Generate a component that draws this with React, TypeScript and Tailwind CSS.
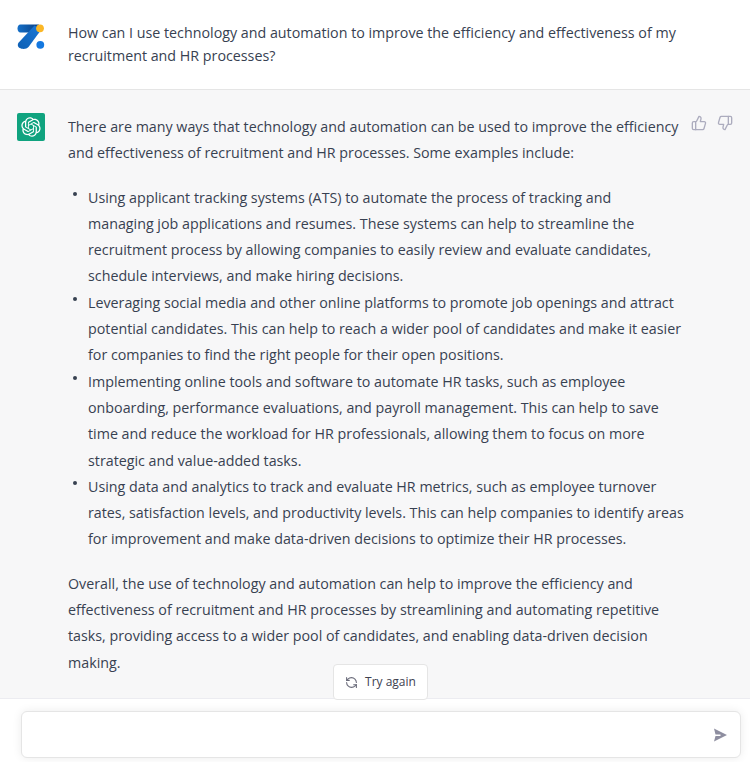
import { RefreshCcw, ThumbsDown, ThumbsUp } from 'lucide-react';
import React from 'react';

const BULLETS = [
  [
    'Using applicant tracking systems (ATS) to automate the process of tracking and',
    'managing job applications and resumes. These systems can help to streamline the',
    'recruitment process by allowing companies to easily review and evaluate candidates,',
    'schedule interviews, and make hiring decisions.',
  ],
  [
    'Leveraging social media and other online platforms to promote job openings and attract',
    'potential candidates. This can help to reach a wider pool of candidates and make it easier',
    'for companies to find the right people for their open positions.',
  ],
  [
    'Implementing online tools and software to automate HR tasks, such as employee',
    'onboarding, performance evaluations, and payroll management. This can help to save',
    'time and reduce the workload for HR professionals, allowing them to focus on more',
    'strategic and value-added tasks.',
  ],
  [
    'Using data and analytics to track and evaluate HR metrics, such as employee turnover',
    'rates, satisfaction levels, and productivity levels. This can help companies to identify areas',
    'for improvement and make data-driven decisions to optimize their HR processes.',
  ],
];

const Lines = ({ lines }: { lines: string[] }) => (
  <>
    {lines.map((line) => (
      <span key={line} className="block whitespace-nowrap">
        {line}
      </span>
    ))}
  </>
);

const Logo = () => (
  <svg width="28" height="26" viewBox="0 0 28 26" className="shrink-0">
    <defs>
      <linearGradient id="logoBar" x1="0" y1="0" x2="1" y2="0">
        <stop offset="0" stopColor="#1570c9" />
        <stop offset="1" stopColor="#0a3f82" />
      </linearGradient>
      <linearGradient id="logoStroke" x1="0" y1="1" x2="1" y2="0">
        <stop offset="0" stopColor="#0d5fb4" />
        <stop offset="1" stopColor="#1b78d6" />
      </linearGradient>
    </defs>
    <path d="M3.500 0.500H22L17 8.500H3.500C-0.500 8.500 -0.500 0.500 3.500 0.500Z" fill="url(#logoBar)" />
    <path d="M17.500 1.500L24 6L11.500 23C9 26 1 25.500 0.800 21C0.800 20.200 1 19.500 1.500 18.800Z" fill="url(#logoStroke)" />
    <circle cx="23" cy="4.300" r="3.900" fill="#fbb726" />
    <circle cx="23.300" cy="20.800" r="3.900" fill="#1478e0" />
  </svg>
);

const OpenAiLogo = () => (
  <div className="w-7 h-7 shrink-0 rounded-[2px] bg-[#10a37f] flex items-center justify-center">
    <svg width="20" height="20" viewBox="0 0 41 41" fill="white">
      <path d="M37.5324 16.8707C37.9808 15.5241 38.1363 14.0974 37.9886 12.6859C37.8409 11.2744 37.3934 9.91076 36.676 8.68622C35.6126 6.83404 33.9882 5.3676 32.0373 4.4985C30.0864 3.62941 27.9098 3.40259 25.8215 3.85078C24.8796 2.7893 23.7219 1.94125 22.4257 1.36341C21.1295 0.785575 19.7249 0.491269 18.3058 0.500197C16.1708 0.495044 14.0893 1.16803 12.3614 2.42214C10.6335 3.67624 9.34853 5.44666 8.6917 7.47815C7.30085 7.76286 5.98686 8.3414 4.8377 9.17505C3.68854 10.0087 2.73073 11.0782 2.02839 12.312C0.956464 14.1591 0.498905 16.2988 0.721698 18.4228C0.944492 20.5467 1.83612 22.5449 3.268 24.1293C2.81966 25.4759 2.66413 26.9026 2.81182 28.3141C2.95951 29.7256 3.40701 31.0892 4.12437 32.3138C5.18791 34.1659 6.8123 35.6322 8.76321 36.5013C10.7141 37.3704 12.8907 37.5973 14.9789 37.1492C15.9208 38.2107 17.0786 39.0587 18.3747 39.6366C19.6709 40.2144 21.0755 40.5087 22.4946 40.4998C24.6307 40.5054 26.7133 39.8321 28.4418 38.5772C30.1704 37.3223 31.4556 35.5506 32.1119 33.5179C33.5027 33.2332 34.8167 32.6547 35.9659 31.821C37.115 30.9874 38.0728 29.9178 38.7752 28.684C39.8458 26.8371 40.3023 24.6979 40.0789 22.5748C39.8556 20.4517 38.9639 18.4544 37.5324 16.8707ZM22.4978 37.8849C20.7443 37.8874 19.0459 37.2733 17.6994 36.1501C17.7601 36.117 17.8666 36.0586 17.936 36.0161L25.9004 31.4156C26.1003 31.3019 26.2663 31.137 26.3813 30.9378C26.4964 30.7386 26.5563 30.5124 26.5549 30.2825V19.0542L29.9213 20.998C29.9389 21.0068 29.9541 21.0198 29.9656 21.0359C29.977 21.052 29.9842 21.0707 29.9867 21.0902V30.3889C29.9842 32.375 29.1946 34.2791 27.7909 35.6841C26.3872 37.0892 24.4838 37.8806 22.4978 37.8849ZM6.39227 31.0064C5.51397 29.4888 5.19742 27.7107 5.49804 25.9832C5.55718 26.0187 5.66048 26.0818 5.73461 26.1244L13.699 30.7248C13.8975 30.8408 14.1233 30.902 14.3532 30.902C14.583 30.902 14.8088 30.8408 15.0073 30.7248L24.731 25.1103V28.9979C24.7321 29.0177 24.7283 29.0376 24.7199 29.0556C24.7115 29.0736 24.6988 29.0893 24.6829 29.1012L16.6317 33.7497C14.9096 34.7416 12.8643 35.0097 10.9447 34.4954C9.02506 33.9811 7.38785 32.7263 6.39227 31.0064ZM4.29707 13.6194C5.17156 12.0998 6.55279 10.9364 8.19885 10.3327C8.19885 10.4013 8.19491 10.5228 8.19491 10.6071V19.808C8.19351 20.0378 8.25334 20.2638 8.36823 20.4629C8.48312 20.6619 8.64893 20.8267 8.84863 20.9404L18.5723 26.5542L15.206 28.4979C15.1894 28.5089 15.1703 28.5155 15.1505 28.5173C15.1307 28.5191 15.1107 28.516 15.0924 28.5082L7.04046 23.8557C5.32135 22.8601 4.06716 21.2235 3.55289 19.3046C3.03862 17.3858 3.30624 15.3413 4.29707 13.6194ZM31.955 20.0556L22.2312 14.4411L25.5976 12.4981C25.6142 12.4872 25.6333 12.4805 25.6531 12.4787C25.6729 12.4769 25.6928 12.4801 25.7111 12.4879L33.7631 17.1364C34.9967 17.849 36.0017 18.8982 36.6606 20.1613C37.3194 21.4244 37.6047 22.849 37.4832 24.2684C37.3617 25.6878 36.8382 27.0432 35.9743 28.1759C35.1103 29.3086 33.9415 30.1717 32.6047 30.6641C32.6047 30.5947 32.6047 30.4733 32.6047 30.3889V21.188C32.6066 20.9586 32.5474 20.7328 32.4332 20.5338C32.319 20.3348 32.154 20.1698 31.955 20.0556ZM35.3055 15.0128C35.2464 14.9765 35.1431 14.9142 35.069 14.8717L27.1045 10.2712C26.906 10.1554 26.6803 10.0943 26.4504 10.0943C26.2206 10.0943 25.9948 10.1554 25.7963 10.2712L16.0726 15.8858V11.9982C16.0715 11.9783 16.0753 11.9585 16.0837 11.9405C16.0921 11.9225 16.1048 11.9068 16.1207 11.8949L24.1719 7.25025C25.4053 6.53903 26.8158 6.19376 28.2383 6.25482C29.6608 6.31589 31.0364 6.78077 32.2044 7.59508C33.3723 8.40939 34.2842 9.53945 34.8334 10.8531C35.3826 12.1667 35.5464 13.6095 35.3055 15.0128ZM14.2424 21.9419L10.8752 19.9981C10.8576 19.9893 10.8423 19.9763 10.8309 19.9602C10.8195 19.9441 10.8122 19.9254 10.8098 19.9058V10.6071C10.8107 9.18295 11.2173 7.78848 11.9819 6.58696C12.7466 5.38544 13.8377 4.42659 15.1275 3.82264C16.4173 3.21869 17.8524 2.99464 19.2649 3.1767C20.6775 3.35876 22.0089 3.93941 23.1034 4.85067C23.0427 4.88379 22.937 4.94215 22.8668 4.98473L14.9024 9.58517C14.7025 9.69878 14.5366 9.86356 14.4215 10.0626C14.3065 10.2616 14.2466 10.4877 14.2479 10.7175L14.2424 21.9419ZM16.071 17.9991L20.4018 15.4978L24.7325 17.9975V22.9985L20.4018 25.4983L16.071 22.9985V17.9991Z" />
    </svg>
  </div>
);

const App = () => {
  return (
    <div className="relative w-[750px] h-[762px] overflow-hidden flex flex-col bg-white text-[14.27px] text-[#374151] font-['Open_Sans',sans-serif]">
      <div className="h-[90px] shrink-0 border-b border-[#e5e5e5] flex gap-[23px] pl-[17px] pt-[22px]">
        <div className="pt-[2px]">
          <Logo />
        </div>
        <div className="leading-[22.5px]">
          <Lines
            lines={[
              'How can I use technology and automation to improve the efficiency and effectiveness of my',
              'recruitment and HR processes?',
            ]}
          />
        </div>
      </div>

      <div className="flex-1 bg-[#f7f7f8] flex pl-[17px] pt-[23px] gap-[23px]">
        <OpenAiLogo />
        <div className="leading-[26.3px] pt-[1px]">
          <Lines
            lines={[
              'There are many ways that technology and automation can be used to improve the efficiency',
              'and effectiveness of recruitment and HR processes. Some examples include:',
            ]}
          />
          <ul className="mt-[18px] mb-[18px] pl-[20px]">
            {BULLETS.map((lines) => (
              <li key={lines[0]} className="relative">
                <span className="absolute -left-[15px] top-[7px] w-[4px] h-[4px] rounded-full bg-[#374151]" />
                <Lines lines={lines} />
              </li>
            ))}
          </ul>
          <Lines
            lines={[
              'Overall, the use of technology and automation can help to improve the efficiency and',
              'effectiveness of recruitment and HR processes by streamlining and automating repetitive',
              'tasks, providing access to a wider pool of candidates, and enabling data-driven decision',
              'making.',
            ]}
          />
        </div>
      </div>

      <div className="h-[64px] shrink-0 border-t border-[#ececf1] pl-[21px] pr-[9px] pt-[12px]">
        <div className="h-[47px] rounded-[6px] border border-[#e5e5e5] bg-white shadow-[0_0_10px_rgba(0,0,0,0.08)] flex items-center justify-end pr-[12px]">
          <svg width="16" height="16" viewBox="0 0 16 16" fill="#8e8ea0">
            <path d="M2 1.500L15 8L2 14.500L3.500 9H8.500V7.500H3.500Z" />
          </svg>
        </div>
      </div>

      <button className="absolute left-[333px] top-[664px] w-[95px] h-[36px] rounded-[4px] border border-[#e5e5e5] bg-white flex items-center justify-center gap-[7px] text-[12px] text-[#40414f]">
        <RefreshCcw size={13} className="text-[#6b6c7b]" />
        Try again
      </button>

      <div className="absolute left-[691px] top-[115px] flex gap-[10px] text-[#acacbe]">
        <ThumbsUp size={16} />
        <ThumbsDown size={16} />
      </div>
    </div>
  );
};

export default App;
